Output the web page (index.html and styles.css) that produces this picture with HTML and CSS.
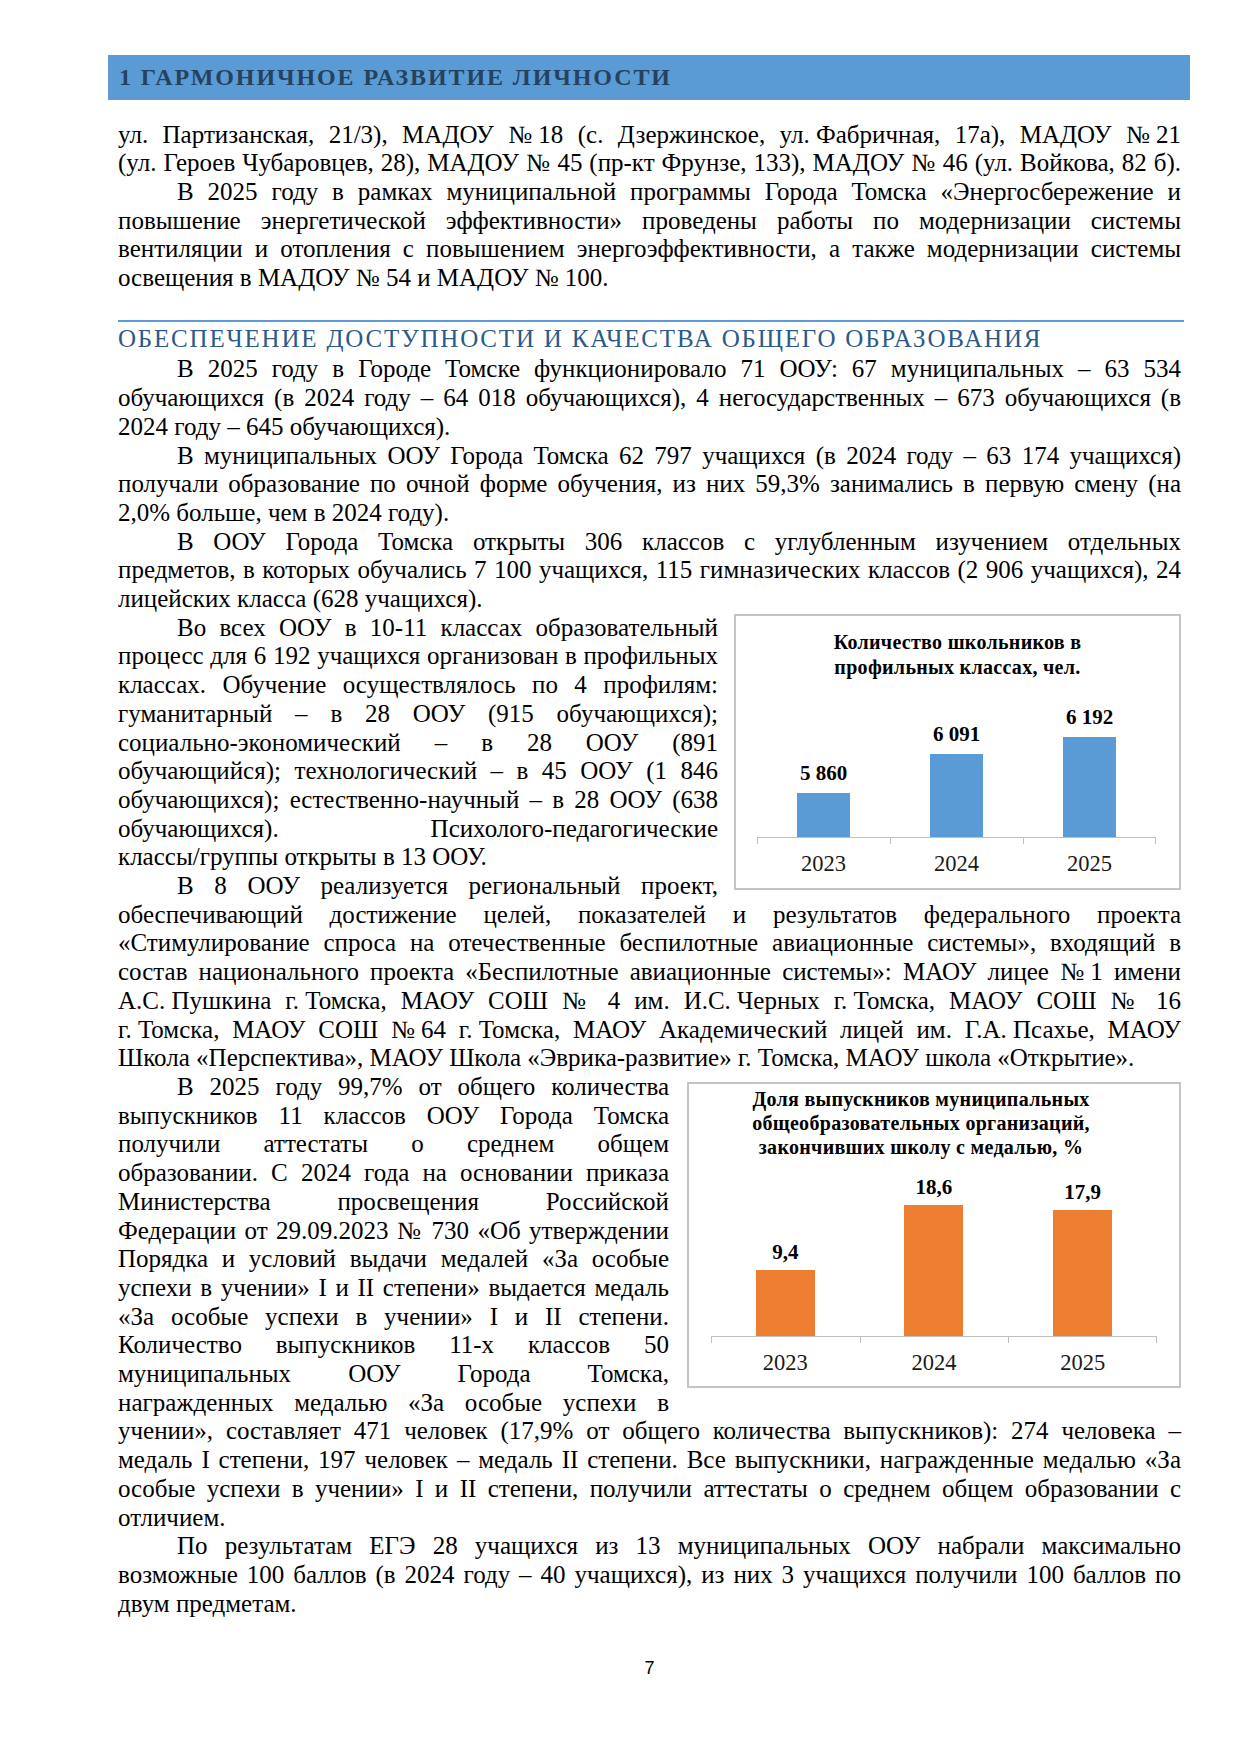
FILE: index.html
```html
<!DOCTYPE html>
<html lang="ru">
<head>
<meta charset="utf-8">
<title>1 Гармоничное развитие личности</title>
<link rel="stylesheet" href="styles.css">
</head>
<body>
<div class="page">
  <div class="banner">1 ГАРМОНИЧНОЕ РАЗВИТИЕ ЛИЧНОСТИ</div>
  <div class="text">
    <div class="para intro">
      <span class="ln">ул. Партизанская, 21/3), МАДОУ <span class="nb">№ 18</span> (с. Дзержинское, <span class="nb">ул. Фабричная,</span> 17а), МАДОУ <span class="nb">№ 21</span></span>
      <span class="ln">(ул. Героев Чубаровцев, 28), МАДОУ № 45 (пр-кт Фрунзе, 133), МАДОУ № 46 (ул. Войкова, 82 б).</span>
    </div>
    <div class="para">
      <span class="ln in">В 2025 году в рамках муниципальной программы Города Томска «Энергосбережение и</span>
      <span class="ln">повышение энергетической эффективности» проведены работы по модернизации системы</span>
      <span class="ln">вентиляции и отопления с повышением энергоэффективности, а также модернизации системы</span>
      освещения в МАДОУ № 54 и МАДОУ № 100.
    </div>

    <h2 class="section-head">ОБЕСПЕЧЕНИЕ ДОСТУПНОСТИ И КАЧЕСТВА ОБЩЕГО ОБРАЗОВАНИЯ</h2>

    <div class="para">
      <span class="ln in">В 2025 году в Городе Томске функционировало 71 ООУ: 67 муниципальных – 63 534</span>
      <span class="ln">обучающихся (в 2024 году – 64 018 обучающихся), 4 негосударственных – 673 обучающихся (в</span>
      2024 году – 645 обучающихся).
    </div>
    <div class="para">
      <span class="ln in">В муниципальных ООУ Города Томска 62 797 учащихся (в 2024 году – 63 174 учащихся)</span>
      <span class="ln">получали образование по очной форме обучения, из них 59,3% занимались в первую смену (на</span>
      2,0% больше, чем в 2024 году).
    </div>
    <div class="para">
      <span class="ln in">В ООУ Города Томска открыты 306 классов с углубленным изучением отдельных</span>
      <span class="ln">предметов, в которых обучались 7 100 учащихся, 115 гимназических классов (2 906 учащихся), 24</span>
      лицейских класса (628 учащихся).
    </div>
    <div class="para">
      <div class="chart chart-a">
        <div class="chart-title">Количество школьников в<br>профильных классах, чел.</div>
        <div class="plot">
          <div class="col"><span class="val">5 860</span><span class="bar blue" style="height:44px"></span></div>
          <div class="col"><span class="val">6 091</span><span class="bar blue" style="height:83px"></span></div>
          <div class="col"><span class="val">6 192</span><span class="bar blue" style="height:100px"></span></div>
        </div>
        <div class="ticks"><span></span><span></span><span></span></div>
        <div class="years"><span>2023</span><span>2024</span><span>2025</span></div>
      </div>
      <span class="ln in">Во всех ООУ в 10-11 классах образовательный</span>
      <span class="ln">процесс для 6 192 учащихся организован в профильных</span>
      <span class="ln">классах. Обучение осуществлялось по 4 профилям:</span>
      <span class="ln">гуманитарный – в 28 ООУ (915 обучающихся);</span>
      <span class="ln">социально-экономический – в 28 ООУ (891</span>
      <span class="ln">обучающийся); технологический – в 45 ООУ (1 846</span>
      <span class="ln">обучающихся); естественно-научный – в 28 ООУ (638</span>
      <span class="ln">обучающихся). Психолого-педагогические</span>
      классы/группы открыты в 13 ООУ.
    </div>
    <div class="para">
      <span class="ln in">В 8 ООУ реализуется региональный проект,</span>
      <span class="ln">обеспечивающий достижение целей, показателей и результатов федерального проекта</span>
      <span class="ln">«Стимулирование спроса на отечественные беспилотные авиационные системы», входящий в</span>
      <span class="ln">состав национального проекта «Беспилотные авиационные системы»: МАОУ лицее <span class="nb">№ 1</span> имени</span>
      <span class="ln"><span class="nb">А.С. Пушкина</span> <span class="nb">г. Томска,</span> МАОУ СОШ № 4 им. <span class="nb">И.С. Черных</span> <span class="nb">г. Томска,</span> МАОУ СОШ № 16</span>
      <span class="ln"><span class="nb">г. Томска,</span> МАОУ СОШ <span class="nb">№ 64</span> <span class="nb">г. Томска,</span> МАОУ Академический лицей им. <span class="nb">Г.А. Псахье,</span> МАОУ</span>
      Школа «Перспектива», МАОУ Школа «Эврика-развитие» г. Томска, МАОУ школа «Открытие».
    </div>
    <div class="para">
      <div class="chart chart-b">
        <div class="chart-title">Доля выпускников муниципальных<br>общеобразовательных организаций,<br>закончивших школу с медалью, %</div>
        <div class="plot">
          <div class="col"><span class="val">9,4</span><span class="bar orange" style="height:66px"></span></div>
          <div class="col"><span class="val">18,6</span><span class="bar orange" style="height:131px"></span></div>
          <div class="col"><span class="val">17,9</span><span class="bar orange" style="height:126px"></span></div>
        </div>
        <div class="ticks"><span></span><span></span><span></span></div>
        <div class="years"><span>2023</span><span>2024</span><span>2025</span></div>
      </div>
      <span class="ln in">В 2025 году 99,7% от общего количества</span>
      <span class="ln">выпускников 11 классов ООУ Города Томска</span>
      <span class="ln">получили аттестаты о среднем общем</span>
      <span class="ln">образовании. С 2024 года на основании приказа</span>
      <span class="ln">Министерства просвещения Российской</span>
      <span class="ln">Федерации от 29.09.2023 № 730 «Об утверждении</span>
      <span class="ln">Порядка и условий выдачи медалей «За особые</span>
      <span class="ln">успехи в учении» I и II степени» выдается медаль</span>
      <span class="ln">«За особые успехи в учении» I и II степени.</span>
      <span class="ln">Количество выпускников 11-х классов 50</span>
      <span class="ln">муниципальных ООУ Города Томска,</span>
      <span class="ln">награжденных медалью «За особые успехи в</span>
      <span class="ln">учении», составляет 471 человек (17,9% от общего количества выпускников): 274 человека –</span>
      <span class="ln">медаль I степени, 197 человек – медаль II степени. Все выпускники, награжденные медалью «За</span>
      <span class="ln">особые успехи в учении» I и II степени, получили аттестаты о среднем общем образовании с</span>
      отличием.
    </div>
    <div class="para">
      <span class="ln in">По результатам ЕГЭ 28 учащихся из 13 муниципальных ООУ набрали максимально</span>
      <span class="ln">возможные 100 баллов (в 2024 году – 40 учащихся), из них 3 учащихся получили 100 баллов по</span>
      двум предметам.
    </div>

    <div class="pagenum">7</div>
  </div>
</div>
</body>
</html>
```

FILE: styles.css
```css
html, body {
  margin: 0;
  padding: 0;
  background: #ffffff;
}

.page {
  width: 1240px;
  min-height: 1754px;
  padding-top: 55px;
  box-sizing: border-box;
  font-family: "Liberation Serif", "Times New Roman", serif;
  color: #000000;
}

.banner {
  margin-left: 108px;
  width: 1082px;
  height: 45px;
  box-sizing: border-box;
  padding-left: 11px;
  background: #5b9bd5;
  color: #25425f;
  font-weight: bold;
  font-size: 24px;
  line-height: 45px;
  letter-spacing: 1.9px;
  white-space: nowrap;
}

.text {
  margin-left: 118px;
  width: 1063px;
  font-size: 25px;
  line-height: 28.7px;
}

.para {
  text-align: justify;
}

.intro {
  margin-top: 20.6px;
}

.ln {
  display: block;
  text-align: justify;
  text-align-last: justify;
}

.in {
  text-indent: 59px;
}

/* groups kept tight (non-breaking spaces in the original) */
.nb {
  display: inline-block;
  text-indent: 0;
  white-space: nowrap;
}

.section-head {
  margin: 27px -3px 1.3px 0;
  padding-top: 3.6px;
  border-top: 2px solid #5b9bd5;
  font-size: 25px;
  font-weight: normal;
  line-height: 28.7px;
  letter-spacing: 1.8px;
  color: #2b5a8a;
  white-space: nowrap;
}

/* charts */
.chart {
  float: right;
  box-sizing: border-box;
  border: 2px solid #c4c4c4;
  background: #ffffff;
  text-align: center;
  text-indent: 0;
  font-family: "Liberation Serif", "Times New Roman", serif;
}

.chart-a {
  width: 447px;
  height: 276px;
  margin: 0 0 0 16px;
  padding-top: 14.5px;
}

.chart-b {
  width: 494px;
  height: 306px;
  margin: 9px 0 10px 18px;
  padding-top: 3px;
}

.chart-title {
  font-weight: bold;
  font-size: 20px;
  letter-spacing: 0.3px;
  white-space: nowrap;
  color: #000000;
}

.chart-a .chart-title {
  line-height: 25px;
}

.chart-b .chart-title {
  line-height: 24px;
  padding-right: 26px;
}

.plot {
  display: grid;
  grid-template-columns: repeat(3, 1fr);
  align-items: end;
  border-bottom: 1px solid #bfbfbf;
}

.chart-a .plot {
  height: 157px;
  margin: 0 23px 0 21px;
}

.chart-b .plot {
  height: 177px;
  margin: 0 22px 0 22px;
}

.col {
  display: flex;
  flex-direction: column;
  align-items: center;
  justify-content: flex-end;
}

.val {
  font-weight: bold;
  font-size: 21px;
  line-height: 22px;
  color: #000000;
}

.chart-a .val {
  margin-bottom: 9px;
}

.chart-b .val {
  margin-bottom: 7px;
}

.bar {
  display: block;
}

.chart-a .bar {
  width: 53px;
}

.chart-b .bar {
  width: 59px;
}

.blue {
  background: #5b9bd5;
}

.orange {
  background: #ed7d31;
}

.ticks {
  display: grid;
  grid-template-columns: repeat(3, 1fr);
  height: 6px;
}

.ticks span {
  border-left: 1px solid #bfbfbf;
}

.ticks span:last-child {
  border-right: 1px solid #bfbfbf;
}

.chart-a .ticks,
.chart-a .years {
  margin: 0 23px 0 21px;
}

.chart-b .ticks,
.chart-b .years {
  margin: 0 22px 0 22px;
}

.years {
  display: grid;
  grid-template-columns: repeat(3, 1fr);
  padding-top: 7px;
  font-size: 22.5px;
  line-height: 26px;
  color: #1a1a1a;
}

.pagenum {
  clear: both;
  margin-top: 40px;
  text-align: center;
  font-family: "Liberation Sans", Arial, sans-serif;
  font-size: 18px;
  line-height: 20px;
  color: #000000;
}
```
